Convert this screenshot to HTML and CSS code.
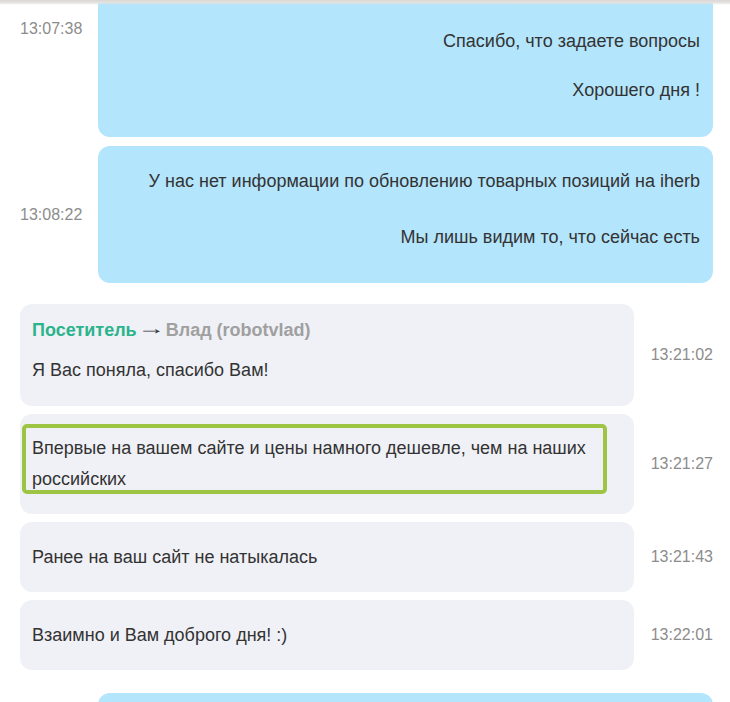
FILE: index.html
```html
<!DOCTYPE html>
<html lang="ru">
<head>
<meta charset="utf-8">
<title>Чат</title>
<link rel="stylesheet" href="styles.css">
</head>
<body>
<div class="top-shadow"></div>
<div class="chat">
  <div class="row row--out row--cut">
    <div class="time time--top">13:07:38</div>
    <div class="bubble bubble--out bubble--cut">
      <p class="line">Спасибо, что задаете вопросы</p>
      <p class="line line--near">Хорошего дня !</p>
    </div>
  </div>
  <div class="row row--out">
    <div class="time">13:08:22</div>
    <div class="bubble bubble--out">
      <p class="line">У нас нет информации по обновлению товарных позиций на iherb</p>
      <p class="line line--far">Мы лишь видим то, что сейчас есть</p>
    </div>
  </div>

  <div class="row row--in row--first-in">
    <div class="bubble bubble--in bubble--named">
      <div class="author"><span class="author-from">Посетитель</span> <span class="arrow">→</span> <span class="author-to">Влад (robotvlad)</span></div>
      <p class="line">Я Вас поняла, спасибо Вам!</p>
    </div>
    <div class="time time--right">13:21:02</div>
  </div>
  <div class="row row--in">
    <div class="bubble bubble--in bubble--marked">
      <div class="mark">
        <p class="line line--mark">Впервые на вашем сайте и цены намного дешевле, чем на наших российских</p>
      </div>
    </div>
    <div class="time time--right">13:21:27</div>
  </div>
  <div class="row row--in">
    <div class="bubble bubble--in">
      <p class="line">Ранее на ваш сайт не натыкалась</p>
    </div>
    <div class="time time--right">13:21:43</div>
  </div>
  <div class="row row--in">
    <div class="bubble bubble--in">
      <p class="line">Взаимно и Вам доброго дня! :)</p>
    </div>
    <div class="time time--right">13:22:01</div>
  </div>

  <div class="row row--out row--next">
    <div class="time"></div>
    <div class="bubble bubble--out bubble--tail"></div>
  </div>
</div>
</body>
</html>
```

FILE: styles.css
```css
html, body {
  margin: 0;
  padding: 0;
  background: #ffffff;
  overflow: hidden;
}

body {
  font-family: "Liberation Sans", Arial, sans-serif;
  color: #333333;
  font-size: 18px;
}

.top-shadow {
  position: fixed;
  top: 0;
  left: 0;
  right: 0;
  height: 5px;
  background: linear-gradient(to bottom, #d9d6d3 0%, #e4e2e0 50%, rgba(240, 240, 240, 0) 100%);
  z-index: 5;
}

.chat {
  display: flex;
  flex-direction: column;
  padding: 0 17px 0 20px;
  margin-top: -10px;
}

.row {
  display: flex;
  align-items: center;
  margin-top: 9px;
}

.row--cut {
  margin-top: 0;
}

.row--in {
  margin-top: 8px;
}

.row--first-in.row--in {
  margin-top: 21px;
}

.row--next {
  margin-top: 23px;
}

.time {
  font-size: 16px;
  line-height: 20px;
  color: #8c8c8c;
  flex: 0 0 78px;
  width: 78px;
}

.time--top {
  align-self: flex-start;
  margin-top: 29px;
}

.time--right {
  flex: 1 1 auto;
  width: auto;
  text-align: right;
}

.bubble {
  border-radius: 12px;
  box-sizing: border-box;
}

.bubble--out {
  flex: 0 0 615px;
  width: 615px;
  background: #b3e5fc;
  text-align: right;
  padding: 20px 13px 30px 13px;
}

.bubble--cut {
  padding-top: 36px;
  padding-bottom: 31px;
  border-top-left-radius: 0;
  border-top-right-radius: 0;
}

.bubble--tail {
  min-height: 80px;
}

.bubble--in {
  flex: 0 0 614px;
  width: 614px;
  background: #f0f1f6;
  padding: 20px 12px 19px 12px;
}

.bubble--named {
  padding-top: 12px;
  padding-bottom: 20px;
}

.bubble--marked {
  padding: 10px 27px 20px 2px;
}

.line {
  margin: 0;
  line-height: 31px;
}

.line--near {
  margin-top: 18px;
}

.line--far {
  margin-top: 25px;
}

.author {
  font-weight: bold;
  line-height: 28px;
  margin-bottom: 11px;
}

.author-from {
  color: #2bb38c;
}

.arrow {
  display: inline-block;
  color: #333333;
  font-weight: normal;
  font-family: "Liberation Serif", serif;
  font-size: 18px;
  line-height: 18px;
  vertical-align: 2px;
  transform: scaleX(1.55);
  margin: 0 1px 0 0;
}

.author-to {
  color: #a0a0a0;
}

.mark {
  border: 4px solid #9dc443;
  border-radius: 5px;
  padding: 5px 6px 0 6px;
  height: 70px;
  box-sizing: border-box;
}

.line--mark {
  line-height: 31px;
}
```
